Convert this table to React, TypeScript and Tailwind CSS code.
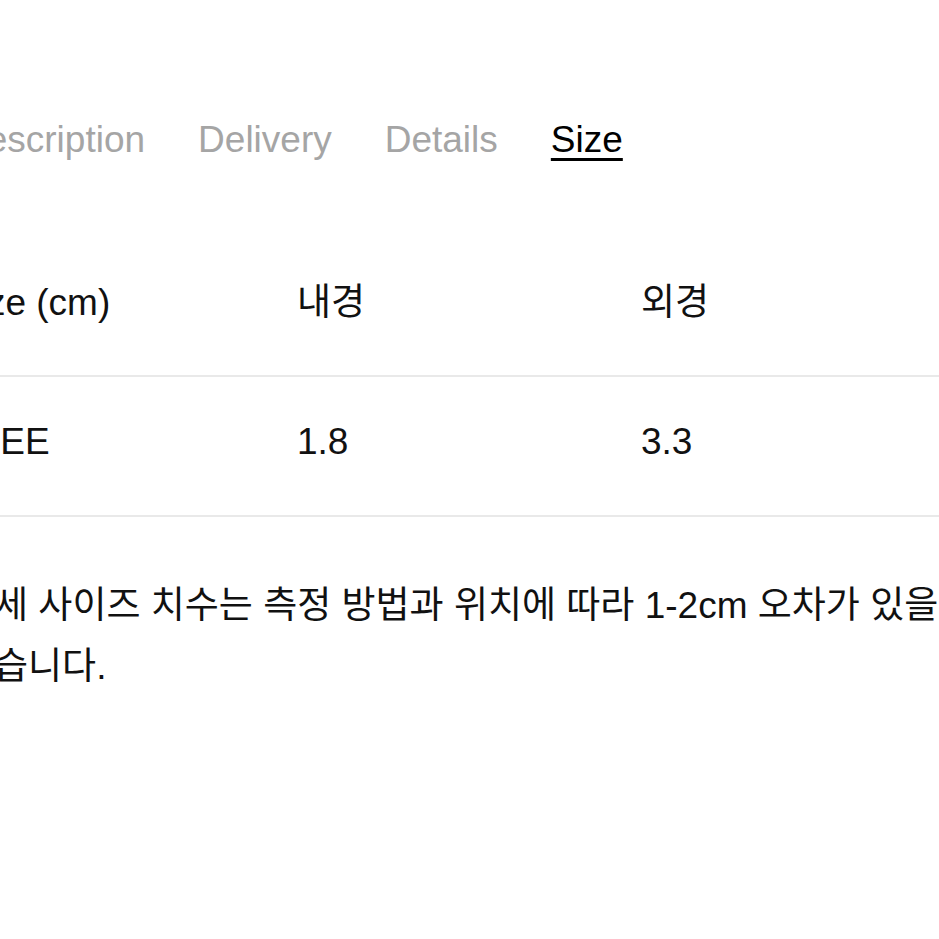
const tabs = ["Description", "Delivery", "Details", "Size"];

const rows = [
  ["FREE", "1.8", "3.3"],
];

export default function App() {
  return (
    <div
      className="h-screen w-screen overflow-hidden bg-white text-[#111]"
      style={{ fontFamily: '"Liberation Sans", Arial, "Noto Sans CJK KR", sans-serif' }}
    >
      <div className="ml-[-46px] w-[1040px]">
        {/* 탭 */}
        <div className="flex gap-[53px] ml-[6px] pt-[118px] text-[37px] leading-[44px]">
          {tabs.map((tab) => (
            <span
              key={tab}
              className={
                tab === "Size"
                  ? "text-black underline decoration-[3px] underline-offset-[6px]"
                  : "text-[#a5a5a5]"
              }
            >
              {tab}
            </span>
          ))}
        </div>

        {/* 사이즈 표 */}
        <div className="mt-[75px]">
          <div className="grid grid-cols-[343px_344px_344px] border-b-2 border-[#e9e9e9] pt-[44px] pb-[50px] text-[37px] leading-[44px]">
            <span>Size (cm)</span>
            <span>내경</span>
            <span>외경</span>
          </div>
          {rows.map((row) => (
            <div
              key={row[0]}
              className="grid grid-cols-[343px_344px_344px] border-b-2 border-[#e9e9e9] pt-[43px] pb-[51px] text-[37px] leading-[44px]"
            >
              {row.map((cell, i) => (
                <span key={i} className={i === 0 ? "-ml-[3px]" : ""}>
                  {cell}
                </span>
              ))}
            </div>
          ))}
        </div>

        {/* 안내 문구 */}
        <p className="mt-[58px] whitespace-nowrap pl-[6px] text-[37px] leading-[61px]">
          상세 사이즈 치수는 측정 방법과 위치에 따라 1-2cm 오차가 있을 수
          <br />
          있습니다.
        </p>
      </div>
    </div>
  );
}
